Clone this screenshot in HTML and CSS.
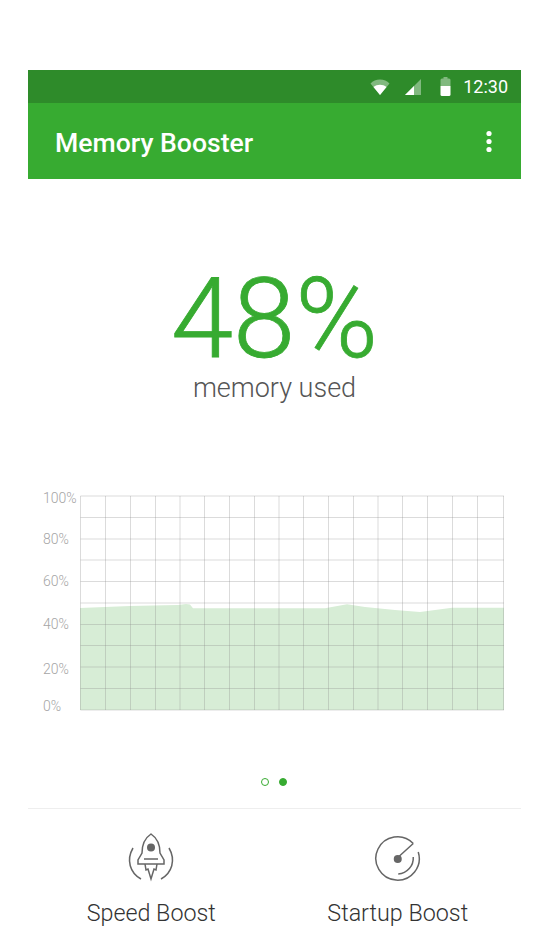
FILE: index.html
```html
<!DOCTYPE html>
<html lang="en">
<head>
<meta charset="utf-8">
<title>Memory Booster</title>
<link rel="stylesheet" href="styles.css">
</head>
<body>
<main class="screen">
  <div class="status-bar">
    <svg class="status-icon wifi" width="20" height="18" viewBox="0 0 20 18">
      <path class="dim" d="M10 17 0.5 5.500C3 3 6 1.500 10 1.500s7 1.500 9.500 4z"/>
      <path d="M10 17 3.500 9C5.500 7.500 7.500 6.800 10 6.800s4.500.7 6.500 2.200z"/>
    </svg>
    <svg class="status-icon signal" width="18" height="18" viewBox="0 0 18 18">
      <path class="dim" d="M17 1V17H1z"/>
      <path d="M10 8V17H1z"/>
    </svg>
    <svg class="status-icon battery" width="11" height="19" viewBox="0 0 11 19">
      <path class="dim" d="M3.500 0h4v1.500H9a1.500 1.500 0 0 1 1.500 1.500v6H.5V3A1.500 1.500 0 0 1 2 1.500h1.500z"/>
      <path d="M.5 9h10v8.500A1.500 1.500 0 0 1 9 19H2a1.500 1.500 0 0 1-1.500-1.500z"/>
    </svg>
    <span class="clock">12:30</span>
  </div>
  <header class="app-bar">
    <h1 class="app-title">Memory Booster</h1>
    <svg class="menu" width="6" height="24" viewBox="0 0 6 24">
      <circle cx="3" cy="3.500" r="2.600"/>
      <circle cx="3" cy="11.500" r="2.600"/>
      <circle cx="3" cy="19.500" r="2.600"/>
    </svg>
  </header>
  <section class="usage">
    <div class="percent">48%</div>
    <div class="usage-label">memory used</div>
  </section>
  <svg class="chart" width="493" height="240" viewBox="28 485 493 240">
    <path class="area" d="M80 608 130 606 165 605.300 178 605 186 604 190 604.500 193 608.300H325L347 604.300 365 607 395 610 420 612 452 607.800H504V710H80z"/>
    <path class="grid" d="M80.500 496H504M80.500 517.500H504M80.500 539H504M80.500 560H504M80.500 581.500H504M80.500 603H504M80.500 624.500H504M80.500 645.500H504M80.500 667H504M80.500 688.500H504M80.500 710H504"/>
    <path class="grid" d="M80.500 496V710M105.500 496V710M130.500 496V710M155.500 496V710M180 496V710M204.500 496V710M229.500 496V710M254.500 496V710M279 496V710M303.500 496V710M328.500 496V710M353.500 496V710M378 496V710M402.500 496V710M427.500 496V710M452.500 496V710M477.500 496V710M503.500 496V710"/>
    <g class="axis">
      <text x="43" y="503">100%</text>
      <text x="43" y="544">80%</text>
      <text x="43" y="586">60%</text>
      <text x="43" y="629">40%</text>
      <text x="43" y="674">20%</text>
      <text x="43" y="711">0%</text>
    </g>
  </svg>
  <div class="pager">
    <span class="dot"></span>
    <span class="dot active"></span>
  </div>
  <nav class="actions">
    <div class="action">
      <svg class="action-icon" width="50" height="52" viewBox="126 832 50 52">
        <path class="line" d="M133 848C126 860 130 873 141 879M169 848C176 860 172 873 161 879"/>
        <path class="line" d="M151 834C145 838 142 845 142 853L138 860V864H164V860L160 853C160 845 157 838 151 834Z"/>
        <path class="line" d="M144 859H158M145 864 146 870 148 869 151 879 154 869 156 870 157 864"/>
        <circle class="fill" cx="151" cy="847.500" r="4"/>
      </svg>
      <span class="action-label">Speed Boost</span>
    </div>
    <div class="action">
      <svg class="action-icon" width="50" height="52" viewBox="372.750 832 50 52">
        <path class="line" d="M413 843.500A21.700 21.700 0 1 0 418 852"/>
        <path class="line" d="M397 858 413 843.500M398 874A16 16 0 0 0 413 857"/>
        <circle class="fill" cx="397.500" cy="859" r="4"/>
      </svg>
      <span class="action-label">Startup Boost</span>
    </div>
  </nav>
</main>
</body>
</html>
```
FILE: styles.css
```css
* { box-sizing: border-box; }
html, body { margin: 0; background: #fff; }
body { height: 945px; overflow: hidden; }
.screen {
  width: 493px;
  margin: 0 0 0 28px;
  padding-top: 70px;
  font-family: Roboto, "Liberation Sans", sans-serif;
}
.status-bar {
  height: 33px;
  background: #2e8b2a;
  display: flex;
  align-items: center;
  justify-content: flex-end;
  padding-right: 13px;
  color: #fff;
}
.status-icon { display: block; fill: #fff; margin-right: 18px; }
.status-icon.wifi { margin-right: 14px; }
.status-icon.battery { margin-right: 12px; }
.dim { opacity: .4; }
.clock { font: 400 18px Roboto, sans-serif; }
.app-bar {
  height: 76px;
  background: #37ab31;
  display: flex;
  align-items: center;
  justify-content: space-between;
  padding: 0 29px 0 27px;
}
.app-title { margin: 2px 0 0; color: #fff; font-size: 26.600px; font-weight: 500; }
.menu { display: block; fill: #fff; margin-top: 2px; }
.usage { text-align: center; padding-top: 86px; height: 306px; }
.percent { font-size: 112px; line-height: 108px; font-weight: 300; color: #37ab31; -webkit-text-stroke: .8px #37ab31; }
.usage-label { font-size: 27px; line-height: 30px; font-weight: 300; color: #555; }
.chart { display: block; }
.area { fill: #d7edd6; }
.grid { fill: none; stroke: #888; stroke-opacity: .3; stroke-width: 1; }
.axis { font-size: 14px; font-weight: 300; fill: #a5a5a5; }
.pager { display: flex; justify-content: center; align-items: center; gap: 10px; height: 83px; padding: 31px 2px 0 0; }
.dot { width: 8px; height: 8px; border-radius: 50%; border: 1px solid #37ab31; background: #fff; }
.dot.active { background: #37ab31; }
.actions { display: flex; border-top: 1px solid #eeeeee; }
.action { flex: 1; display: flex; flex-direction: column; align-items: center; padding-top: 23px; }
.action-icon { display: block; }
.action-label { font-size: 23.300px; font-weight: 300; color: #333; margin-top: 14px; line-height: 30px; }
.line { fill: none; stroke: #666; stroke-width: 1.500; }
.fill { fill: #666; }
```
